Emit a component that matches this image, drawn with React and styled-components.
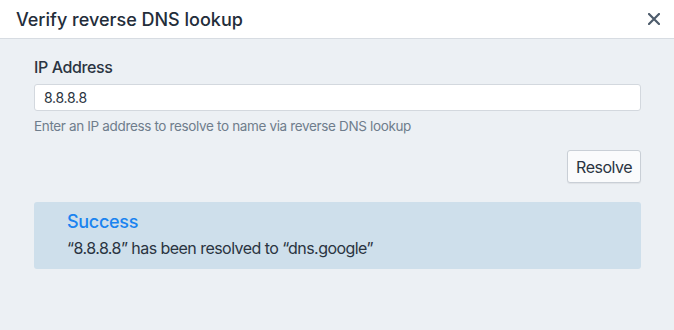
import styled, { createGlobalStyle } from "styled-components";

const Global = createGlobalStyle`
  html, body { margin: 0; padding: 0; }
  body {
    font-family: Inter, "Noto Sans", "Liberation Sans", sans-serif;
    background: #ecf0f4;
    color: #2a3441;
  }
`;

const Modal = styled.div`
  width: 674px;
  height: 330px;
  background: #ecf0f4;
  display: flex;
  flex-direction: column;
`;

const Header = styled.div`
  height: 38px;
  background: #ffffff;
  border-bottom: 1px solid #d7dce2;
  display: flex;
  align-items: center;
  justify-content: space-between;
  padding: 0 10px 0 16px;
`;

const Title = styled.h2`
  margin: 0;
  font-size: 18px;
  font-weight: 500;
  color: #232d3a;
`;

const Close = styled.button`
  border: none;
  background: none;
  padding: 0;
  width: 20px;
  height: 20px;
  display: flex;
  align-items: center;
  justify-content: center;
  color: #4e5c6c;
  cursor: pointer;
`;

const Body = styled.div`
  padding: 18px 33px 0 34px;
  display: flex;
  flex-direction: column;
`;

const Label = styled.label`
  font-size: 16px;
  font-weight: 500;
  color: #2a3441;
  line-height: 20px;
  letter-spacing: -0.4px;
  margin-bottom: 7px;
`;

const Input = styled.input`
  box-sizing: border-box;
  width: 100%;
  height: 27px;
  border: 1px solid #d3d8de;
  border-radius: 3px;
  background: #fff;
  padding: 0 9px;
  font-family: inherit;
  font-size: 14px;
  letter-spacing: -0.3px;
  color: #2a3441;
  outline: none;
`;

const Help = styled.div`
  margin-top: 7px;
  font-size: 13.5px;
  letter-spacing: -0.35px;
  color: #6f7d8c;
  line-height: 17px;
`;

const Actions = styled.div`
  display: flex;
  justify-content: flex-end;
  margin-top: 15px;
`;

const Button = styled.button`
  box-sizing: border-box;
  height: 33px;
  padding: 0 8px;
  background: #fafbfc;
  border: 1px solid #c9cfd6;
  border-radius: 3px;
  box-shadow: 0 1px 1px rgba(0, 0, 0, 0.06);
  font-family: inherit;
  font-size: 16px;
  letter-spacing: -0.5px;
  color: #2a3441;
  cursor: pointer;
`;

const Alert = styled.div`
  margin-top: 19px;
  background: #cedfeb;
  border-radius: 3px;
  padding: 9px 33px 11px;
  display: flex;
  flex-direction: column;
  gap: 5px;
`;

const AlertTitle = styled.div`
  font-size: 18px;
  font-weight: 500;
  color: #1a83f0;
  line-height: 22px;
  letter-spacing: -0.3px;
`;

const AlertText = styled.div`
  font-size: 16px;
  letter-spacing: -0.55px;
  color: #2a3441;
  line-height: 20px;
`;

export default function App() {
  return (
    <>
      <Global />
      <Modal>
        <Header>
          <Title>Verify reverse DNS lookup</Title>
          <Close aria-label="Close">
            <svg width="12" height="12" viewBox="0 0 12 12">
              <path d="M1 1L11 11M11 1L1 11" stroke="currentColor" strokeWidth="2.2" strokeLinecap="round" />
            </svg>
          </Close>
        </Header>
        <Body>
          <Label>IP Address</Label>
          <Input defaultValue="8.8.8.8" />
          <Help>Enter an IP address to resolve to name via reverse DNS lookup</Help>
          <Actions>
            <Button>Resolve</Button>
          </Actions>
          <Alert>
            <AlertTitle>Success</AlertTitle>
            <AlertText>“8.8.8.8” has been resolved to “dns.google”</AlertText>
          </Alert>
        </Body>
      </Modal>
    </>
  );
}
